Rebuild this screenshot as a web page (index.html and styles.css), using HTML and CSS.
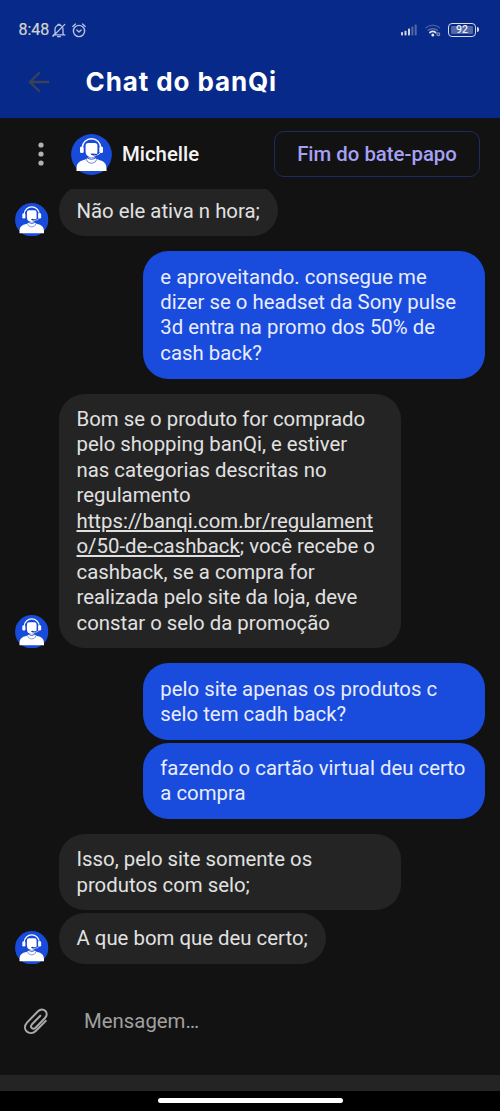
FILE: index.html
```html
<!DOCTYPE html>
<html lang="pt-BR">
<head>
<meta charset="utf-8">
<title>Chat do banQi</title>
<link rel="stylesheet" href="styles.css">
</head>
<body>
<svg class="defs" width="0" height="0" aria-hidden="true">
  <symbol id="agent" viewBox="0 0 41 41">
    <circle cx="20.5" cy="20.5" r="20.4" fill="#194bdb"/>
    <path d="M5.500 36.900v-2.500c0-5.200 3-7.600 7.200-8.500 2-.4 3.400-.9 4-2.400h7.600c.6 1.500 2 2 4 2.400 4.200.9 7.200 3.300 7.200 8.500v2.500z" fill="#fff"/>
    <path d="M15.500 25.300c.6 5.200 9.400 5.200 10 0" fill="none" stroke="#5675ca" stroke-width=".9"/>
    <path d="M16 23.600q4.500 3.200 9 0" fill="none" stroke="#194bdb" stroke-width="1"/>
    <path d="M14.600 11.500q0-2.500 2.600-2.500h6.600q2.600 0 2.600 2.500v6.300q0 5-5.900 5.400-5.900-.4-5.900-5.400z" fill="#fff"/>
    <path d="M11.400 13.500a9.100 8.700 0 0 1 18.200 0" fill="none" stroke="#fff" stroke-width="1.400"/>
    <rect x="9" y="12.500" width="3.700" height="6.500" rx="1.500" fill="#fff"/>
    <rect x="28.300" y="12.500" width="3.700" height="6.500" rx="1.500" fill="#fff"/>
    <path d="M29.400 18.500q-1.200 2.500-4.500 2.500" fill="none" stroke="#fff" stroke-width=".9"/>
    <path d="M19.500 19.800q1.800-.8 3.500 0l3.200.2v1l-3.200.5q-2.500.3-3.500-1.700z" fill="#173a9d"/>
  </symbol>
</svg>
<div class="phone">
  <header class="top">
    <div class="status">
      <span class="time">8:48</span>
      <svg class="bell" width="14" height="15" viewBox="0 0 14 15" fill="none" stroke="#b9c2df" stroke-width="1.300" stroke-linecap="round">
        <path d="M3 10.800V6.200a4 4 0 0 1 8 0v4.600l1.200 1H1.800zM6 1.300h2M5.600 13.700h2.800M1 13.300 12.800 1.400"/>
      </svg>
      <svg class="alarm" width="14" height="15" viewBox="0 0 14 15" fill="none" stroke="#b9c2df" stroke-width="1.400" stroke-linecap="round" stroke-linejoin="round">
        <circle cx="7" cy="8" r="5.600"/><path d="m4.800 7.100 2.200 2 2.200-2M.8 3.400l2.600-2.300M13.200 3.400l-2.600-2.300"/>
      </svg>
      <svg class="signal" width="16" height="12" viewBox="0 0 16 12" fill="#d4d6dc">
        <rect x="0" y="8" width="2" height="3.500" rx=".7"/><rect x="3.500" y="6.700" width="2" height="4.800" rx=".7"/><rect x="7" y="4.600" width="2" height="6.900" rx=".7"/>
        <g fill="#5068a8"><rect x="10.400" y="2.500" width="2" height="9" rx=".7"/><rect x="13.700" y=".4" width="2" height="11.100" rx=".7"/></g>
      </svg>
      <svg class="wifi" width="16" height="13" viewBox="0 0 16 13" fill="none" stroke-linecap="round">
        <path d="M1 3.800a10 10 0 0 1 13.600 0" stroke="#405aa2" stroke-width="1.500"/><path d="M3.200 6.300a7 7 0 0 1 9.200 0" stroke="#6074af" stroke-width="1.300"/><path d="M4.900 8.600a4 4 0 0 1 5.800 0" stroke="#e4e5e8" stroke-width="1.600"/><circle cx="7.800" cy="11" r="1.500" fill="#e4e5e8"/><circle cx="13.300" cy="10.200" r="1.400" stroke="#8795bc" stroke-width="1.200"/>
      </svg>
      <div class="battery">92</div>
    </div>
    <div class="title-row">
      <svg width="22" height="22" viewBox="0 0 22 22" fill="none" stroke="#3a4258" stroke-width="2.300"><path d="M21.200 11H2M11.700 1.200 1.900 11l9.800 9.800"/></svg>
      <h1>Chat do banQi</h1>
    </div>
  </header>
  <div class="agent-bar">
    <svg class="dots" width="6" height="24" viewBox="0 0 6 24" fill="#b2b2b2"><circle cx="3" cy="3" r="2.600"/><circle cx="3" cy="12" r="2.600"/><circle cx="3" cy="21" r="2.600"/></svg>
    <svg class="avatar-large"><use href="#agent"/></svg>
    <span class="name">Michelle</span>
    <button class="end-chat" type="button">Fim do bate-papo</button>
  </div>
  <main class="messages">
    <section class="group received">
      <svg class="avatar"><use href="#agent"/></svg>
      <div class="stack"><p class="bubble">Não ele ativa n hora;</p></div>
    </section>
    <section class="group sent">
      <p class="bubble wide">e aproveitando. consegue me<br>dizer se o headset da Sony pulse<br>3d entra na promo dos 50% de<br>cash back?</p>
    </section>
    <section class="group received">
      <svg class="avatar"><use href="#agent"/></svg>
      <div class="stack"><p class="bubble wide">Bom se o produto for comprado<br>pelo shopping banQi, e estiver<br>nas categorias descritas no<br>regulamento<br><span class="link">https://banqi.com.br/regulament<br>o/50-de-cashback</span>; você recebe o<br>cashback, se a compra for<br>realizada pelo site da loja, deve<br>constar o selo da promoção</p></div>
    </section>
    <section class="group sent">
      <p class="bubble wide">pelo site apenas os produtos c<br>selo tem cadh back?</p>
      <p class="bubble wide">fazendo o cartão virtual deu certo<br>a compra</p>
    </section>
    <section class="group received">
      <svg class="avatar"><use href="#agent"/></svg>
      <div class="stack">
        <p class="bubble wide">Isso, pelo site somente os<br>produtos com selo;</p>
        <p class="bubble">A que bom que deu certo;</p>
      </div>
    </section>
  </main>
  <div class="composer">
    <svg width="26" height="28" viewBox="0 0 26 28" fill="none" stroke="#aaa" stroke-width="2" stroke-linecap="round" stroke-linejoin="round">
      <path d="M17.300 8.700 9 17.300c-2.600 3 .8 6 3.600 3.400L22 11c4.800-5.400-1.900-11.500-7-6.700L4.200 15.400c-6.300 7 2.200 14.700 8.800 8.300l9.800-9.800"/>
    </svg>
    <span>Mensagem…</span>
  </div>
  <div class="strip"></div>
  <div class="nav"><span></span></div>
</div>
</body>
</html>
```
FILE: styles.css
```css
* { box-sizing: border-box; }
body { margin: 0; background: #121212; font-family: Roboto, sans-serif; }
.defs { display: block; position: absolute; }
.phone { width: 500px; height: 1111px; display: flex; flex-direction: column; background: #121212; overflow: hidden; }
.top { height: 118px; flex: none; background: #07298a; }
.status { display: flex; align-items: center; height: 60px; padding: 0 22px 0 18.5px; }
.time { width: 31px; font-size: 16px; line-height: 18px; color: #d3d4ce; white-space: nowrap; -webkit-text-stroke: .2px #d3d4ce; }
.bell { margin-left: 2.5px; }
.alarm { margin-left: 6px; }
.signal { margin-left: auto; margin-right: 1px; }
.wifi { margin-left: 7px; }
.battery {
  position: relative; width: 28px; height: 14px; margin-left: 7px; margin-right: 2px; border: 1.5px solid #d9dbe0; border-radius: 4px;
  background: #5267a5; background-clip: content-box; padding: 2px;
  font-size: 10.5px; font-weight: 500; line-height: 8px; text-align: center; color: #eceef2;
}
.battery::after { content: ""; position: absolute; right: -4px; top: 3px; width: 2px; height: 5px; border-radius: 0 2px 2px 0; background: #d9dbe0; }
.title-row { display: flex; align-items: center; height: 44px; padding-left: 28px; gap: 35.5px; }
h1 { margin: 0; font: 700 26px/36px Inter, sans-serif; letter-spacing: .9px; color: #fff; white-space: nowrap; }
.agent-bar { display: flex; align-items: center; flex: none; height: 71px; padding: 1px 20px 0 38px; }
.avatar-large { width: 41px; height: 41px; margin-left: 27px; }
.name { margin-left: 10px; font-size: 20.36px; font-weight: 500; color: #f4f4f4; }
.end-chat {
  width: 206px; height: 46px; margin-left: auto; padding: 0; border: 1.3px solid #1c2b62; border-radius: 10px;
  background: none; font: 500 20.36px/24px Roboto, sans-serif; color: #a5a1f5; white-space: nowrap;
}
.messages { display: flex; flex-direction: column; justify-content: flex-end; gap: 15.2px; flex: none; height: 775px; overflow: hidden; }
.group { display: flex; flex: none; }
.received { align-items: flex-end; padding-left: 15px; gap: 10.2px; }
.sent { flex-direction: column; align-items: flex-end; gap: 2.8px; padding-right: 15px; }
.stack { display: flex; flex-direction: column; align-items: flex-start; gap: 2.8px; }
.avatar { width: 33.5px; height: 33.5px; flex: none; }
.bubble {
  margin: 0; padding: 13.1px 17.8px 12.3px; border-radius: 25.4px; background: #242424; color: #e1e1e1;
  font-size: 20.36px; line-height: 25.45px; white-space: nowrap;
}
.wide { width: 342.5px; }
.sent .bubble { background: #194bdd; color: #e9edff; }
.link { text-decoration: underline; text-decoration-thickness: 1.5px; text-underline-offset: 2px; }
.composer { display: flex; align-items: center; flex: none; height: 111px; padding: 3px 0 0 23px; gap: 35px; font-size: 20.36px; color: #a0a0a0; }
.composer span { margin-top: -1px; }
.strip { flex: none; height: 16px; background: #242424; }
.nav { display: flex; justify-content: center; flex: none; height: 20px; padding-top: 7px; background: #000; }
.nav span { width: 185px; height: 5px; border-radius: 3px; background: #fff; }
```
